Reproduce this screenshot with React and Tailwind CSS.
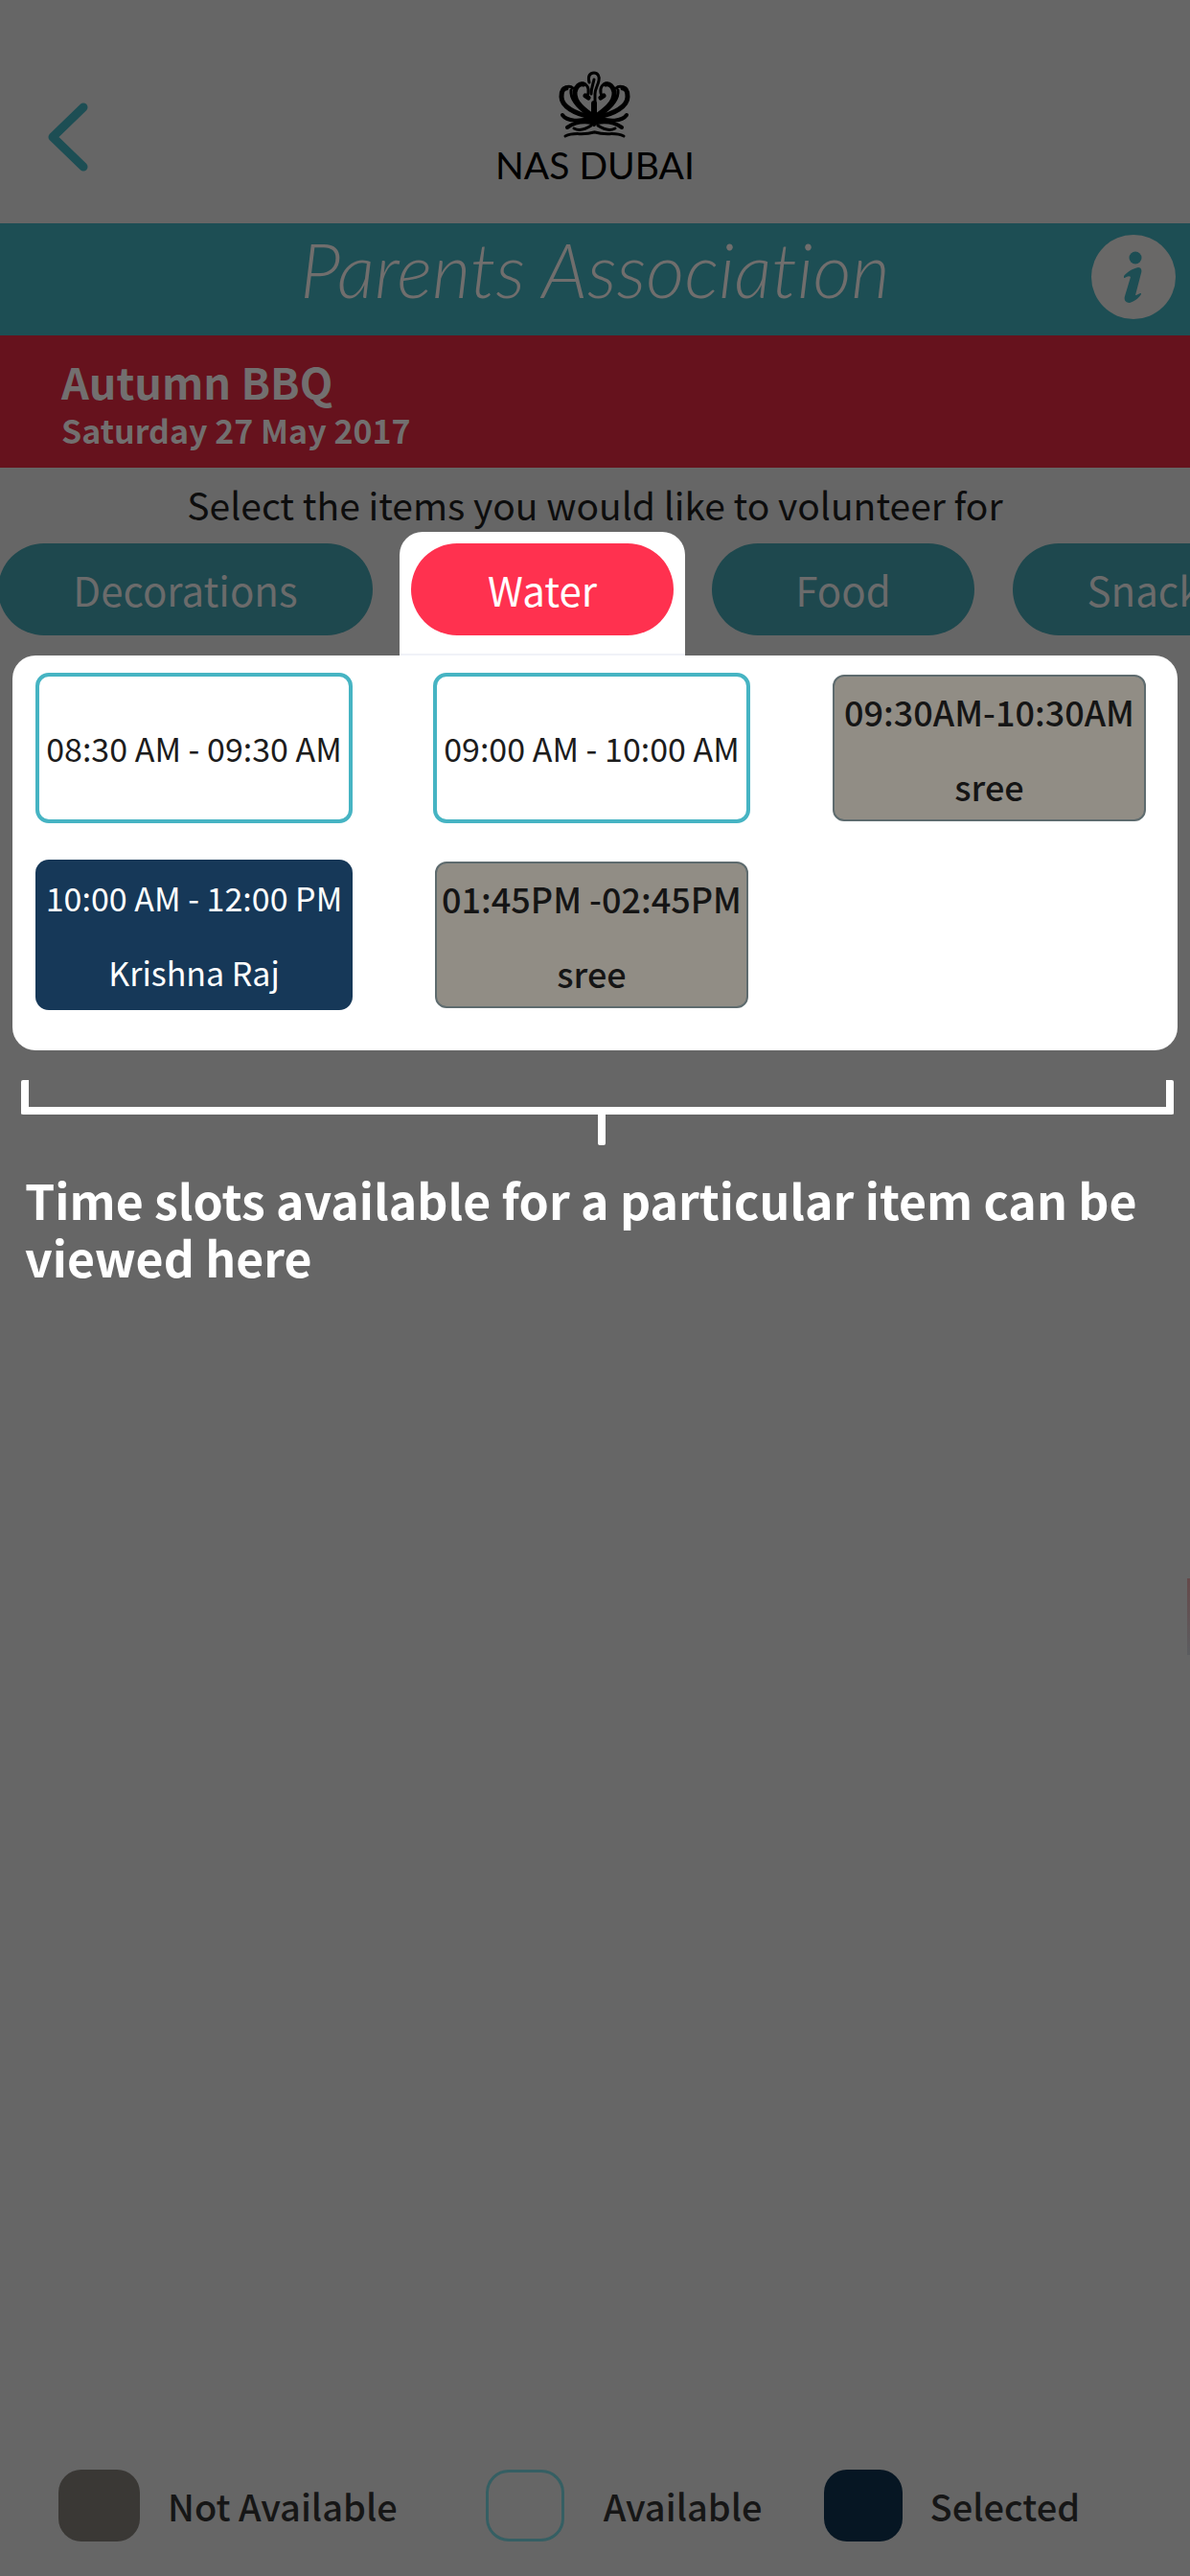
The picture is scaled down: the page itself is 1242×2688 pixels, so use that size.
import React from "react";

const tabs = ["Decorations", "Water", "Food", "Snack"];

function Slot({ kind, time, name }) {
  if (kind === "available")
    return (
      <button className="flex h-[157px] items-center justify-center whitespace-nowrap rounded-[14px] border-4 border-[#46b4c3] bg-white text-[34px] leading-[40px] text-[#1c1c1c]">
        {time}
      </button>
    );
  if (kind === "selected")
    return (
      <button className="flex h-[157px] flex-col items-center justify-center gap-[38px] whitespace-nowrap rounded-[14px] bg-[#163858] text-[34px] leading-[40px] text-white">
        <span>{time}</span>
        <span>{name}</span>
      </button>
    );
  return (
    <button
      disabled
      className="m-[2px] flex h-[153px] flex-col items-center justify-center gap-[38px] whitespace-nowrap rounded-[12px] border-2 border-[#5e6b6e] bg-[#918d85] text-[36px] font-medium leading-[40px] text-[#151515]"
    >
      <span>{time}</span>
      <span>{name}</span>
    </button>
  );
}

function Crest() {
  const half = (
    <>
      <path strokeWidth="5" d="M37 48C27 41 16 33 17 22c1-6 5-9 9-8" />
      <path strokeWidth="3" d="M24 13c5 0 8 4 7 10l-1 3" />
      <path strokeWidth="5" d="M28 26l3 2" />
      <path strokeWidth="5" d="M34 48C17 45 3 37 3 27c0-5 1-9 5-9" />
      <path strokeWidth="3" d="M7 17c3-1 6-1 8 1M13 20c-1 9 5 17 18 26" />
      <path strokeWidth="4" d="M4 46c5 7 18 7 31 3" />
      <path strokeWidth="4" d="M9 59c7-5 15-7 26-5" />
      <path strokeWidth="3" d="M16 60c6 3 12 1 18-3" />
      <path strokeWidth="3" d="M7 68c10-5 17 0 30-4" />
    </>
  );
  return (
    <svg viewBox="0 0 76 72" className="h-[72px] w-[76px]" fill="none" stroke="black" strokeLinecap="round">
      {half}
      <g transform="matrix(-1 0 0 1 75 0)">{half}</g>
      <path strokeWidth="3" d="M32 12C30 5 33 2 37 2s6 4 5 8c-1 6-4 8-4 14v24" />
      <path strokeWidth="3" d="M37 9c-1 5-3 9-3 15" />
      <path strokeWidth="6" d="M37 50V34" />
      <path fill="black" strokeWidth="1" d="M27 47h21l-6 7-5 4-5-4z" />
    </svg>
  );
}

export default function App() {
  return (
    <div className="relative flex min-h-screen flex-col overflow-hidden bg-[#666666] font-['Noto_Sans_CJK_SC',sans-serif]">
      <header className="grid h-[233px] grid-cols-3 items-start">
        <button aria-label="Back" className="ml-[48px] mt-[106px] w-[46px]">
          <svg viewBox="0 0 46 74" className="h-[74px] w-[46px]" fill="none" stroke="#1d4e54" strokeWidth="9" strokeLinecap="round" strokeLinejoin="round">
            <path d="M39 6 7 37 39 68" />
          </svg>
        </button>
        <div className="flex flex-col items-center pt-[74px] text-black">
          <Crest />
          <span className="whitespace-nowrap font-[Lato,sans-serif] text-[39px] leading-[52px]">NAS DUBAI</span>
        </div>
      </header>

      <div className="grid h-[117px] grid-cols-[1fr_auto_1fr] items-start bg-[#1d4e54] text-[#706e6d]">
        <span />
        <h1 className="whitespace-nowrap font-[Lato,sans-serif] text-[78px] font-light italic leading-[96px] [font-variant-ligatures:none]">Parents Association</h1>
        <button aria-label="Information" className="mr-[15px] mt-[12px] size-[88px] justify-self-end">
          <svg viewBox="0 0 88 88" className="size-[88px]">
            <circle cx="44" cy="44" r="44" fill="#696867" />
            <g fill="#1d4e54">
              <circle cx="46" cy="24" r="6.5" />
              <path d="M34 43c4-5 10-8 15-9 3 0 4 3 3 6l-6 23c2 0 4-2 6-2 1 2-7 9-12 10-5 0-6-4-5-7l6-20c-2-2-5 1-7 1z" />
            </g>
          </svg>
        </button>
      </div>

      <section className="flex h-[138px] flex-col bg-[#66121d] pl-[64px] pt-[20px] font-bold text-[#726f6f]">
        <h2 className="text-[45px] leading-[56px]">Autumn BBQ</h2>
        <p className="text-[34px] leading-[46px]">Saturday 27 May 2017</p>
      </section>

      <p className="pt-[12px] text-center text-[39px] leading-[52px] text-[#0d0d0d]">Select the items you would like to volunteer for</p>

      <nav className="-ml-[2px] mt-[3px] flex h-[129px]">
        {tabs.map((t) => (
          <div
            key={t}
            className={
              t === "Water"
                ? "mx-[28px] shrink-0 rounded-t-[24px] border-b-2 border-[#f0f2f8] bg-white px-[12px] pt-[12px]"
                : t === "Food"
                  ? "mr-[40px] shrink-0 pt-[12px]"
                  : "shrink-0 pt-[12px]"
            }
          >
            <button
              className={
                t === "Water"
                  ? "h-[96px] w-[274px] rounded-full bg-[#ff314f] text-[42px] leading-[60px] text-white"
                  : t === "Decorations"
                    ? "h-[96px] w-[391px] rounded-full bg-[#1e484e] text-[42px] leading-[60px] text-[#6b6b6b]"
                    : "h-[96px] w-[274px] rounded-full bg-[#1e484e] text-[42px] leading-[60px] text-[#6b6b6b]"
              }
            >
              {t}
            </button>
          </div>
        ))}
      </nav>

      <main className="mx-[13px] grid grid-cols-3 gap-x-[84px] gap-y-[38px] rounded-[24px] bg-white pb-[42px] pl-[24px] pr-[31px] pt-[18px]">
        <Slot kind="available" time="08:30 AM - 09:30 AM" />
        <Slot kind="available" time="09:00 AM - 10:00 AM" />
        <Slot kind="taken" time="09:30AM-10:30AM" name="sree" />
        <Slot kind="selected" time="10:00 AM - 12:00 PM" name="Krishna Raj" />
        <Slot kind="taken" time="01:45PM -02:45PM" name="sree" />
      </main>

      <div className="ml-[22px] mr-[17px] mt-[31px]">
        <div className="h-[36px] rounded-[2px] border-x-8 border-b-8 border-white" />
        <div className="flex justify-center pl-[8px]">
          <div className="h-[32px] w-[8px] rounded-b-[2px] bg-white" />
        </div>
      </div>

      <p className="px-[26px] pt-[26px] text-[50px] font-bold leading-[60px] text-white">
        Time slots available for a particular item can be viewed here
      </p>

      <footer className="mt-auto flex items-center pb-[36px] pl-[61px] text-[38px] font-medium leading-[75px] text-[#161616]">
        <span className="h-[75px] w-[85px] rounded-[24px] bg-[#3a3835]" />
        <span className="ml-[29px]">Not Available</span>
        <span className="ml-[92px] h-[75px] w-[82px] rounded-[24px] border-[3px] border-[#355f63]" />
        <span className="ml-[41px]">Available</span>
        <span className="ml-[64px] h-[75px] w-[82px] rounded-[24px] bg-[#061623]" />
        <span className="ml-[29px]">Selected</span>
      </footer>

      <div className="absolute right-0 top-[1647px] h-[80px] w-[3px] bg-linear-to-b from-[#65494a] to-[#5b5d60]" />
    </div>
  );
}
